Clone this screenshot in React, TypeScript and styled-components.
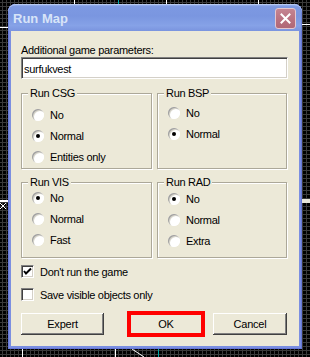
import styled, { createGlobalStyle } from "styled-components";

const GlobalStyle = createGlobalStyle`
  html, body { margin: 0; padding: 0; background: #000; }
  body {
    font-family: "Liberation Sans", Arial, sans-serif;
    font-size: 11px;
    color: #000;
  }
  * { box-sizing: border-box; }
`;

const groups = [
  { title: "Run CSG", options: ["No", "Normal", "Entities only"], checked: 1, pad: 10 },
  { title: "Run BSP", options: ["No", "Normal"], checked: 1, pad: 8 },
  { title: "Run VIS", options: ["No", "Normal", "Fast"], checked: 0, pad: 4 },
  { title: "Run RAD", options: ["No", "Normal", "Extra"], checked: 0, pad: 5 },
];

const checks = [
  { label: "Don't run the game", on: true },
  { label: "Save visible objects only", on: false },
];

const Canvas = styled.div`
  position: relative;
  width: 310px;
  height: 357px;
  overflow: hidden;
  padding: 4px 8px 0;
  background-color: #000;
  background-image: linear-gradient(to right, #3a3a3a 1px, transparent 1px),
    linear-gradient(to bottom, #3a3a3a 1px, transparent 1px);
  background-size: 4px 4px;
  background-position: 2px 2px;
`;

const MapLines = styled.svg`
  position: absolute;
  left: 0;
  top: 0;
`;

const Window = styled.div`
  position: relative;
  z-index: 1;
  width: 294px;
  height: 345px;
  display: flex;
  flex-direction: column;
  padding: 0 3px 3px;
  border-radius: 8px 8px 0 0;
  background: #7b8fe1;
  box-shadow: inset 0 0 0 1px #6677d8;
`;

const TitleBar = styled.div`
  height: 27px;
  display: flex;
  align-items: center;
  justify-content: space-between;
  margin: 0 -3px;
  padding: 0 6px 0 5px;
  border-radius: 8px 8px 0 0;
  background: linear-gradient(
    to bottom,
    #a5bdf0 0%,
    #7d99e2 10%,
    #7a96e0 45%,
    #86a2e7 80%,
    #7a94df 100%
  );
  box-shadow: inset 0 1px 0 #b6c8f2, inset 1px 0 0 #6c82da, inset -1px 0 0 #6c82da;
`;

const Title = styled.span`
  font-family: "Liberation Sans", Arial, sans-serif;
  font-weight: bold;
  font-size: 13px;
  color: #d8e4f8;
  padding-top: 1px;
`;

const CloseButton = styled.div`
  width: 21px;
  height: 21px;
  margin-top: 2px;
  display: flex;
  align-items: center;
  justify-content: center;
  border-radius: 3px;
  border: 1px solid #e4c7cf;
  background: linear-gradient(to bottom, #c48592, #b8707f 60%, #b06877);
`;

const Body = styled.div`
  flex: 1;
  display: flex;
  flex-direction: column;
  padding: 13px 11px 11px 10px;
  background: #ece9d8;
`;

const FieldLabel = styled.div`
  line-height: 13px;
  height: 13px;
  letter-spacing: -0.3px;
`;

const TextInput = styled.div`
  height: 22px;
  display: flex;
  align-items: center;
  padding: 1px 0 0 2px;
  background: #fff;
  border-style: solid;
  border-width: 1px;
  border-color: #808080 #fff #fff #808080;
  box-shadow: inset 1px 1px 0 #404040, inset -1px -1px 0 #d4d0c8;
  letter-spacing: -0.3px;
`;

const GroupGrid = styled.div`
  margin-top: 14px;
  display: grid;
  grid-template-columns: 131px 130px;
  grid-auto-rows: 76px;
  column-gap: 5px;
  row-gap: 13px;
`;

const Group = styled.div<{ $pad: number }>`
  border: 1px solid #aca899;
  box-shadow: inset 1px 1px 0 #fff, 1px 1px 0 #fff;
  padding: 0 0 0 10px;
  display: flex;
  flex-direction: column;

  & > ul {
    margin: ${(p) => p.$pad}px 0 0;
  }
`;

const Caption = styled.span`
  align-self: flex-start;
  margin: -7px 0 -6px -4px;
  padding: 0 2px;
  line-height: 13px;
  background: #ece9d8;
  letter-spacing: -0.3px;
`;

const OptionList = styled.ul`
  list-style: none;
  padding: 0;
`;

const Option = styled.li`
  height: 21px;
  display: flex;
  align-items: center;
  gap: 6px;
  letter-spacing: -0.3px;
`;

const Radio = styled.span<{ $on: boolean }>`
  width: 12px;
  height: 12px;
  flex: none;
  border-radius: 50%;
  background: #fff;
  box-shadow: inset 1px 1px 0 #a0a0a0, inset -1px -1px 0 #fff,
    inset 2px 2px 0 #d8d6cc;
  display: flex;
  align-items: center;
  justify-content: center;

  &::after {
    content: "";
    width: 4px;
    height: 4px;
    border-radius: 50%;
    background: ${(p) => (p.$on ? "#000" : "transparent")};
  }
`;

const CheckList = styled.div`
  margin-top: 2px;
  display: flex;
  flex-direction: column;
`;

const CheckRow = styled.div`
  height: 23px;
  display: flex;
  align-items: center;
  gap: 6px;
  letter-spacing: -0.3px;
`;

const Box = styled.span`
  width: 13px;
  height: 13px;
  flex: none;
  background: #fff;
  border-style: solid;
  border-width: 1px;
  border-color: #808080 #fff #fff #808080;
  box-shadow: inset 1px 1px 0 #404040, inset -1px -1px 0 #d4d0c8;
  display: flex;
  align-items: center;
  justify-content: center;
`;

const ButtonRow = styled.div`
  margin-top: 7px;
  display: flex;
`;

const Button = styled.div<{ $w: number; $gap: number; $marked?: boolean }>`
  width: ${(p) => p.$w}px;
  height: 22px;
  margin-left: ${(p) => p.$gap}px;
  display: flex;
  align-items: center;
  justify-content: center;
  background: #ece9d8;
  box-shadow: inset -1px -1px 0 #404040, inset 1px 1px 0 #fff,
    inset -2px -2px 0 #808080, inset 2px 2px 0 #ece9d8;
  letter-spacing: -0.2px;
  outline: ${(p) => (p.$marked ? "4px solid #ff0000" : "none")};
  outline-offset: -2px;
`;

export default function App() {
  return (
    <>
      <GlobalStyle />
      <Canvas>
        <MapLines width={310} height={357} viewBox="0 0 310 357">
          <g stroke="#ffffff" strokeWidth={1} shapeRendering="crispEdges">
            <line x1={74.5} y1={0} x2={74.5} y2={5} />
            <line x1={166.5} y1={0} x2={166.5} y2={5} />
            <line x1={258.5} y1={0} x2={258.5} y2={5} />
            <line x1={0} y1={27.5} x2={9} y2={27.5} />
            <line x1={300} y1={24.5} x2={310} y2={24.5} />
            <line x1={0} y1={200.5} x2={9} y2={200.5} />
            <line x1={0} y1={201.5} x2={9} y2={201.5} />
            <line x1={22.5} y1={348} x2={22.5} y2={357} />
            <line x1={115.5} y1={348} x2={115.5} y2={357} />
          </g>
          <g stroke="#ffffff" strokeWidth={1}>
            <line x1={132} y1={349} x2={144} y2={357} />
            <line x1={0} y1={203} x2={6} y2={209} />
            <line x1={6} y1={203} x2={0} y2={209} />
          </g>
          <g stroke="#00a8a8" strokeWidth={1} shapeRendering="crispEdges">
            <line x1={118.5} y1={0} x2={118.5} y2={5} />
            <line x1={158.5} y1={348} x2={158.5} y2={357} />
          </g>
          <rect x={300} y={199} width={10} height={4} fill="#e8e6da" />
        </MapLines>

        <Window>
          <TitleBar>
            <Title>Run Map</Title>
            <CloseButton>
              <svg width="11" height="11" viewBox="0 0 11 11">
                <path
                  d="M1.5 1.5 L9.5 9.5 M9.5 1.5 L1.5 9.5"
                  stroke="#ffffff"
                  strokeWidth={2}
                  strokeLinecap="square"
                />
              </svg>
            </CloseButton>
          </TitleBar>

          <Body>
            <FieldLabel>Additional game parameters:</FieldLabel>
            <TextInput>surfukvest</TextInput>

            <GroupGrid>
              {groups.map((g) => (
                <Group key={g.title} $pad={g.pad}>
                  <Caption>{g.title}</Caption>
                  <OptionList>
                    {g.options.map((o, i) => (
                      <Option key={o}>
                        <Radio $on={i === g.checked} />
                        {o}
                      </Option>
                    ))}
                  </OptionList>
                </Group>
              ))}
            </GroupGrid>

            <CheckList>
              {checks.map((c) => (
                <CheckRow key={c.label}>
                  <Box>
                    {c.on && (
                      <svg width="9" height="9" viewBox="0 0 9 9">
                        <path
                          d="M1 4 L3 6.5 L8 1.5"
                          stroke="#000"
                          strokeWidth={2}
                          fill="none"
                        />
                      </svg>
                    )}
                  </Box>
                  {c.label}
                </CheckRow>
              ))}
            </CheckList>

            <ButtonRow>
              <Button $w={83} $gap={0}>Expert</Button>
              <Button $w={74} $gap={25} $marked>
                OK
              </Button>
              <Button $w={74} $gap={10}>Cancel</Button>
            </ButtonRow>
          </Body>
        </Window>
      </Canvas>
    </>
  );
}
